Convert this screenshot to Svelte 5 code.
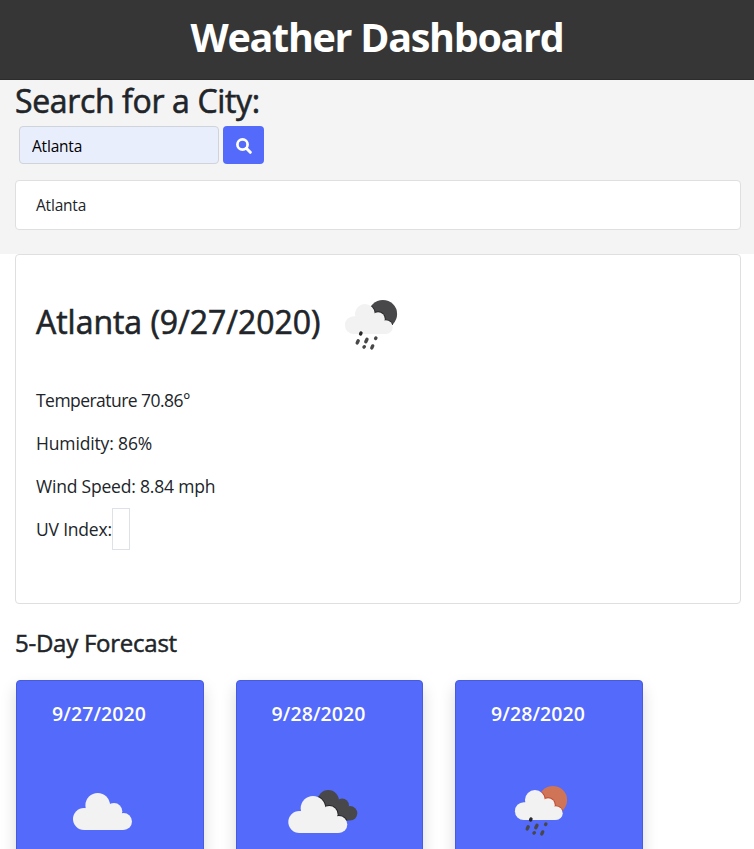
<script>
  const readings = [
    { text: 'Temperature 70.86°', spacing: -0.54 },
    { text: 'Humidity: 86%', spacing: -0.15 },
    { text: 'Wind Speed: 8.84 mph', spacing: -0.2 }
  ];
  const days = [
    { date: '9/27/2020', icon: 'cloud' },
    { date: '9/28/2020', icon: 'broken' },
    { date: '9/28/2020', icon: 'rain' }
  ];
</script>

{#snippet cloud()}
  <circle cx="11" cy="26" r="11" />
  <circle cx="24.7" cy="12.3" r="12.3" />
  <circle cx="41" cy="18.3" r="8.3" />
  <circle cx="50.5" cy="28.5" r="8.5" />
  <path d="M11 16 24 10 42 18 50 27V37H11Z" />
{/snippet}

{#snippet weather(kind, orb, edge)}
  <svg class="weather" width="100" height="100" viewBox="0 0 100 100" aria-hidden="true">
    {#if kind === 'cloud'}
      <g transform="translate(21 31)" fill="#f2f2f2">{@render cloud()}</g>
    {:else if kind === 'broken'}
      <g fill="#48484a">
        <circle cx="56.3" cy="38.7" r="10.7" />
        <circle cx="70.2" cy="43.2" r="6.7" />
        <circle cx="78" cy="51.3" r="7.3" />
        <path d="M56 38 70 42 78 50 77 58.6H58Z" />
      </g>
      <clipPath id="back-cloud">
        <circle cx="56.3" cy="38.7" r="10.7" />
        <circle cx="70.2" cy="43.2" r="6.7" />
        <circle cx="78" cy="51.3" r="7.3" />
        <path d="M56 38 70 42 78 50 77 58.6H58Z" />
      </clipPath>
      <g clip-path="url(#back-cloud)">
        <g transform="translate(16.3 34)" fill="#252527" stroke="#252527" stroke-width="2">{@render cloud()}</g>
      </g>
      <g transform="translate(16.3 34)" fill="#f2f2f2">{@render cloud()}</g>
    {:else}
      <g transform="translate(.4 -3.9)">
        <circle cx="61.5" cy="42" r="14.2" fill={orb} />
        <clipPath id={'orb-' + edge.slice(1)}><circle cx="61.5" cy="42" r="14.2" /></clipPath>
        <g clip-path={`url(#orb-${edge.slice(1)})`}>
          <g transform="translate(23.5 32) scale(.81)" fill={edge} stroke={edge} stroke-width="2.2">{@render cloud()}</g>
        </g>
        <g transform="translate(23.5 32) scale(.81)" fill="#f2f2f2">{@render cloud()}</g>
        <g stroke="#48484a" stroke-width="3.4" stroke-linecap="round">
          <path stroke="#28282a" d="M39.2 61.8 39.6 61" />
          <path d="M35.8 70.8 36.8 68.6M44.4 69.6 45.6 67.2M54.2 66.4 54.5 65.8M42.6 75 42.9 74.6M50.4 75.8 51.3 73.8" />
        </g>
      </g>
    {/if}
  </svg>
{/snippet}

<div class="page">
  <header><h1>Weather Dashboard</h1></header>

  <section class="search">
    <h2>Search for a City:</h2>
    <form onsubmit={(e) => e.preventDefault()}>
      <input type="text" value="Atlanta" aria-label="City" />
      <button aria-label="Search">
        <svg width="16" height="16" viewBox="0 0 16 16" fill="none" stroke="#fff">
          <circle cx="6.5" cy="6.5" r="5.1" stroke-width="2.7" />
          <path d="m10.3 10.3 4 4" stroke-width="3" stroke-linecap="round" />
        </svg>
      </button>
    </form>
    <div class="history">Atlanta</div>
  </section>

  <main>
    <section class="current">
      <div class="title">
        <h2>Atlanta (9/27/2020)</h2>
        {@render weather('rain', '#48484a', '#29292b')}
      </div>
      {#each readings as r}
        <p style:letter-spacing="{r.spacing}px">{r.text}</p>
      {/each}
      <p class="uv">UV Index:<span></span></p>
    </section>

    <h3>5-Day Forecast</h3>
    <div class="days">
      {#each days as day}
        <article>
          <h5>{day.date}</h5>
          {@render weather(day.icon, '#cf7456', '#c0492f')}
        </article>
      {/each}
    </div>
  </main>
</div>

<style>
  :global(body) { margin: 0; overflow: hidden; background: #fff; }
  .page {
    box-sizing: border-box;
    height: 849px;
    overflow: hidden;
    color: #212529;
    font-family: 'Open Sans', 'Noto Sans', sans-serif;
    font-size: 16px;
  }
  h1, h2, h3, h5, p { margin: 0; white-space: nowrap; }
  svg { display: block; flex: none; }
  header {
    box-sizing: border-box;
    height: 80px;
    padding-top: 7px;
    background: #363636;
    border-bottom: 1px solid #2c2c2c;
    text-align: center;
  }
  h1 { color: #fff; font-size: 39.5px; line-height: 60px; font-weight: 700; letter-spacing: -1.3px; }
  .search { box-sizing: border-box; height: 174px; padding: 2px 13px 0 15px; background: #f4f4f4; }
  h2 { font-size: 32px; line-height: 38px; font-weight: 400; letter-spacing: -0.36px; -webkit-text-stroke: 0.6px currentColor; }
  form { display: flex; gap: 4px; margin: 6px 0 16px 4px; }
  input {
    box-sizing: border-box;
    width: 200px;
    height: 38px;
    padding: 2px 12px 0;
    border: 1px solid #ced4da;
    border-radius: 4px;
    background: #e9eefd;
    color: #000;
    font: inherit;
    font-size: 15.5px;
    letter-spacing: -0.2px;
    outline: none;
  }
  button {
    display: flex;
    align-items: center;
    justify-content: center;
    width: 41px;
    height: 38px;
    padding: 2px 0 0;
    border: 0;
    border-radius: 4px;
    background: #536afa;
  }
  .history {
    box-sizing: border-box;
    height: 50px;
    padding: 0 20px;
    border: 1px solid #dfdfdf;
    border-radius: 4px;
    background: #fff;
    font-size: 15.5px;
    line-height: 48px;
    letter-spacing: -0.2px;
  }
  main { padding: 0 13px 0 15px; }
  .current {
    box-sizing: border-box;
    height: 350px;
    padding: 18px 20px 0;
    border: 1px solid #dfdfdf;
    border-radius: 4px;
    background: #fff;
  }
  .title { display: flex; height: 106px; }
  .title h2 { width: 285px; line-height: 98px; letter-spacing: -0.03px; }
  .title :global(.weather) { margin-top: 3px; }
  .current p { height: 43px; font-size: 17.5px; line-height: 43px; }
  .current .uv { display: flex; letter-spacing: -0.2px; }
  .uv span { box-sizing: border-box; width: 18px; height: 42px; border: 1px solid #dee2e6; }
  h3 {
    margin: 24px 0 22px;
    font-size: 24px;
    line-height: 30px;
    font-weight: 400;
    letter-spacing: -0.25px;
    -webkit-text-stroke: 0.5px currentColor;
  }
  .days { display: flex; gap: 32px; padding-left: 1px; }
  article {
    box-sizing: border-box;
    width: 187.5px;
    height: 230px;
    padding: 20px 35px 0;
    border: 1px solid #485cdb;
    border-radius: 4px;
    background: #536afa;
    color: #fff;
    box-shadow: 0 8px 16px rgba(0, 0, 0, .15);
  }
  h5 { font-size: 19.5px; line-height: 26px; font-weight: 600; letter-spacing: 0.08px; }
  article .weather { margin-top: 35px; }
</style>
